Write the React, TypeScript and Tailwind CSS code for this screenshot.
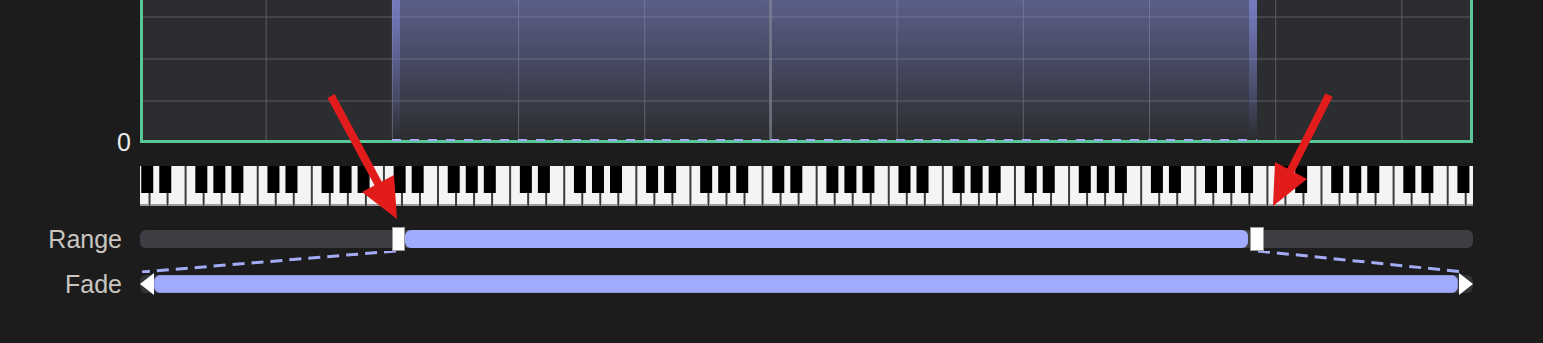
import React from 'react';

const WHITE_W = 18.03;
const KEY_START = -8.5;
const WHITE_COUNT = 76;
// white keys (C D E F G A B) that carry a black key on their right side
const HAS_BLACK = [true, true, false, true, true, true, false];

const Keyboard = () => {
  const whites = Array.from({ length: WHITE_COUNT }, (_, k) => KEY_START + k * WHITE_W);
  const blacks = whites
    .map((x, k) => (HAS_BLACK[k % 7] ? x + WHITE_W - 8.3 : null))
    .filter((x): x is number => x !== null);

  return (
    <svg width="1333" height="40" viewBox="0 0 1333 40" className="block bg-[#3b3b3b]">
      {whites.map((x, i) => (
        <g key={i}>
          <rect x={x + 1} y={0} width={WHITE_W - 2} height={40} fill="#f4f4f4" />
          <rect x={x + 1} y={38} width={WHITE_W - 2} height={2} fill="#9a9a9a" />
        </g>
      ))}
      {blacks.map((x, i) => (
        <rect key={i} x={x} y={0} width={12} height={27} fill="#000" />
      ))}
    </svg>
  );
};

const Arrows = () => (
  <svg width="1543" height="343" className="absolute inset-0 pointer-events-none">
    <line x1="331" y1="96" x2="380" y2="187" stroke="#e21b1b" strokeWidth="8" />
    <polygon points="397,219 394,175 362,192" fill="#e21b1b" />
    <line x1="1329" y1="95" x2="1290" y2="172" stroke="#e21b1b" strokeWidth="8" />
    <polygon points="1273,206 1307,179 1275,162" fill="#e21b1b" />
  </svg>
);

const Triangle = ({ dir }: { dir: 'left' | 'right' }) => (
  <svg width="14" height="22" className="block shrink-0">
    <polygon points={dir === 'left' ? '0,11 14,0 14,22' : '14,11 0,0 0,22'} fill="#fff" />
  </svg>
);

export default function App() {
  return (
    <div className="relative w-[1543px] h-[343px] overflow-hidden bg-[#1c1c1c] font-['Liberation_Sans',Arial,sans-serif]">
      {/* Graph */}
      <div className="flex h-[143px]">
        <div className="w-[140px] flex items-end justify-end pr-[9px]">
          <span className="text-[25px] leading-none text-[#ececec] mb-[-12px]">0</span>
        </div>
        <div className="flex w-[1333px] border-x-[3px] border-b-[3px] border-[#5bc797] bg-[#2c2d30] bg-[linear-gradient(to_right,#5c5d61_1px,transparent_1px),linear-gradient(to_bottom,#5c5d61_1px,transparent_1px)] bg-[size:126.2px_42px] bg-[position:122.7px_16.5px]">
          <div className="w-[249px] shrink-0" />
          {/* selected range */}
          <div className="flex flex-col w-[865px] shrink-0 bg-linear-to-b from-[#8890e0]/50 to-[#8890e0]/0">
            <div className="flex flex-1">
              <div className="w-[8px] bg-linear-to-b from-[#7c85d0]/75 via-[#7c85d0]/30 to-transparent" />
              <div className="w-[369px]" />
              <div className="w-[3px] bg-[#80838f]/60" />
              <div className="flex-1" />
              <div className="w-[8px] bg-linear-to-b from-[#7c85d0]/75 via-[#7c85d0]/30 to-transparent" />
            </div>
            <div className="h-[2px] mb-[-1px] bg-[repeating-linear-gradient(90deg,#a3abf5_0_9px,transparent_9px_18px)]" />
          </div>
        </div>
      </div>

      {/* Keyboard */}
      <div className="mt-[23px] ml-[140px] w-[1333px]">
        <Keyboard />
      </div>

      {/* Range */}
      <div className="mt-[21px] flex items-center h-[24px]">
        <div className="w-[140px] pr-[18px] text-right text-[25px] leading-none text-[#c9c5c0]">Range</div>
        <div className="flex items-center w-[1333px] h-[18px] rounded-[6px] bg-[#3e3f44]">
          <div className="w-[252px] shrink-0" />
          <div className="w-[13px] h-[24px] shrink-0 bg-white border border-[#9a9a9a]" />
          <div className="w-[843px] h-full shrink-0 rounded-[6px] bg-[#a1abfd]" />
          <div className="w-[2px] shrink-0" />
          <div className="w-[14px] h-[24px] shrink-0 bg-white border border-[#9a9a9a]" />
        </div>
      </div>

      {/* fade guides */}
      <svg width="1543" height="22" className="block">
        <line x1="396" y1="0" x2="142" y2="21" stroke="#a3abf5" strokeWidth="3" strokeDasharray="12 7" />
        <line x1="1258" y1="0" x2="1464" y2="21" stroke="#a3abf5" strokeWidth="3" strokeDasharray="12 7" />
      </svg>

      {/* Fade */}
      <div className="flex items-center h-[22px]">
        <div className="w-[140px] pr-[18px] text-right text-[25px] leading-none text-[#c9c5c0]">Fade</div>
        <div className="flex items-center w-[1333px] h-[18px] rounded-[6px] bg-[#333438]">
          <Triangle dir="left" />
          <div className="flex-1 h-full rounded-[6px] bg-[#a1abfd] border border-[#8c95dc]" />
          <div className="w-[1px] shrink-0" />
          <Triangle dir="right" />
        </div>
      </div>

      <Arrows />
    </div>
  );
}
